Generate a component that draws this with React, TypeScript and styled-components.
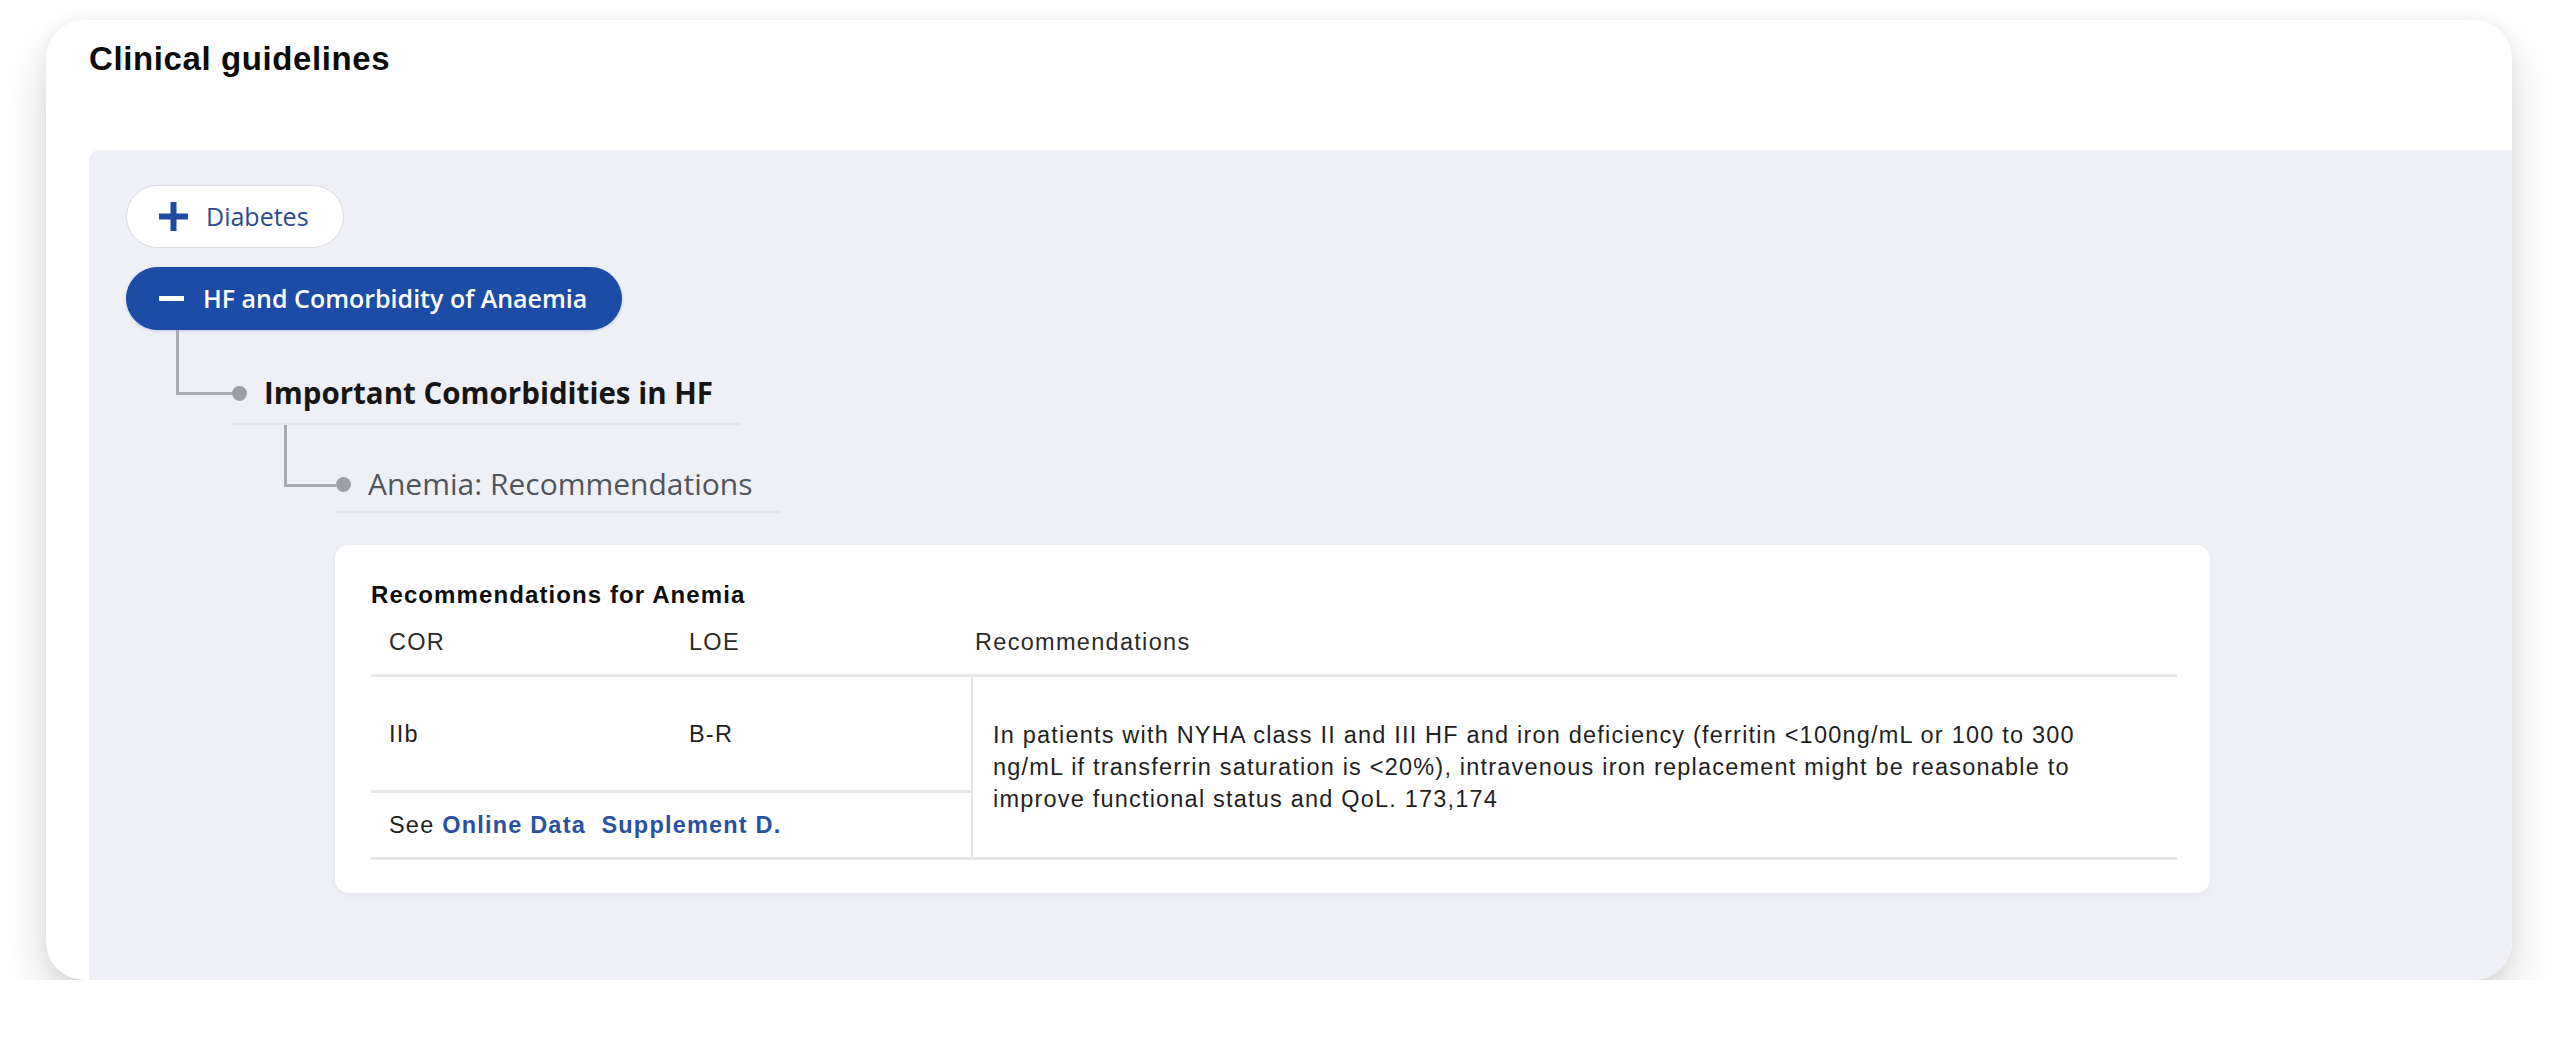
import React from 'react';
import styled, { createGlobalStyle } from 'styled-components';

const GlobalStyle = createGlobalStyle`
  html, body {
    margin: 0;
    padding: 0;
    background: #ffffff;
  }
  body {
    font-family: 'Liberation Sans', Arial, sans-serif;
  }
`;

const Page = styled.div`
  padding: 20px 48px 0 46px;
`;

const Card = styled.section`
  height: 960px;
  display: flex;
  flex-direction: column;
  background: #ffffff;
  border-radius: 38px;
  overflow: hidden;
  box-shadow: 0 24px 46px rgba(0, 0, 0, 0.16), 0 0 16px rgba(0, 0, 0, 0.05);
`;

const Header = styled.header`
  height: 130px;
  box-sizing: border-box;
  padding: 19px 0 0 43px;
`;

const Title = styled.h1`
  margin: 0;
  font: 700 33px/40px 'Liberation Sans', Arial, sans-serif;
  letter-spacing: 0.6px;
  color: #0b0b0b;
`;

const Panel = styled.div`
  flex: 1;
  margin-left: 43px;
  background: #eff0f5;
  border-top-left-radius: 10px;
  padding: 35px 0 0 37px;
`;

const PillList = styled.div`
  display: flex;
  flex-direction: column;
  align-items: flex-start;
  gap: 19px;
`;

const Group = styled.div`
  display: flex;
  flex-direction: column;
  align-items: flex-start;
`;

const Pill = styled.button<{ $active?: boolean }>`
  display: inline-flex;
  align-items: center;
  gap: ${p => (p.$active ? '19px' : '18px')};
  height: 63px;
  box-sizing: border-box;
  padding: 0 34px 0 32px;
  border-radius: 32px;
  border: 1.5px solid ${p => (p.$active ? '#1c4ca6' : '#d9dae0')};
  background: ${p => (p.$active ? '#1c4ca6' : '#ffffff')};
  color: ${p => (p.$active ? '#ffffff' : '#2d4b91')};
  font-family: 'Open Sans', 'Noto Sans', sans-serif;
  font-size: 25px;
  font-weight: ${p => (p.$active ? 600 : 400)};
  line-height: 1;
  cursor: pointer;
  box-shadow: ${p => (p.$active ? '0 1px 3px rgba(28, 76, 166, 0.25)' : 'none')};

  svg {
    flex: none;
    display: block;
  }
`;

const Branch = styled.div<{ $indent: number }>`
  display: flex;
  flex-direction: column;
  align-items: flex-start;
  margin-left: ${p => p.$indent}px;
`;

const Item = styled.div`
  display: flex;
  align-items: flex-start;
`;

const Elbow = styled.div<{ $w: number; $h: number }>`
  flex: none;
  width: ${p => p.$w}px;
  height: ${p => p.$h}px;
  box-sizing: border-box;
  border-left: 3px solid #a8aab2;
  border-bottom: 3px solid #a8aab2;
`;

const Node = styled.div<{ $top: number; $pad: number }>`
  display: flex;
  align-items: center;
  gap: 17px;
  margin-top: ${p => p.$top}px;
  padding: ${p => p.$pad}px 27px ${p => p.$pad}px 0;
  border-bottom: 2px solid #e3e4ea;
`;

const Dot = styled.span`
  flex: none;
  width: 15px;
  height: 15px;
  border-radius: 50%;
  background: #9c9fa7;
`;

const NodeLabel = styled.span<{ $strong?: boolean }>`
  font-family: 'Open Sans', 'Noto Sans', sans-serif;
  font-size: ${p => (p.$strong ? '29.5px' : '30px')};
  font-weight: ${p => (p.$strong ? 700 : 400)};
  line-height: 34px;
  color: ${p => (p.$strong ? '#161616' : '#50555d')};
  white-space: nowrap;
`;

const RecCard = styled.div`
  width: 1875px;
  box-sizing: border-box;
  margin: 32px 0 0 51px;
  padding: 36px 33px 33px 36px;
  background: #ffffff;
  border-radius: 14px;
  box-shadow: 0 2px 6px rgba(0, 0, 0, 0.06);
`;

const RecTitle = styled.h3`
  margin: 0;
  font: 700 24px/28px 'Liberation Sans', Arial, sans-serif;
  letter-spacing: 1.1px;
  color: #0d0d0d;
`;

const Table = styled.table`
  width: 100%;
  border-collapse: separate;
  border-spacing: 0;
  table-layout: fixed;
  font-family: 'Liberation Sans', Arial, sans-serif;
  font-size: 23.5px;
  letter-spacing: 1.2px;
  color: #1f1f1f;
`;

const Th = styled.th<{ $pl: number }>`
  text-align: left;
  font-weight: 400;
  line-height: 28px;
  letter-spacing: 1.3px;
  color: #2a2a2a;
  padding: 19px 0 18px ${p => p.$pl}px;
  border-bottom: 3px solid #e6e6e8;
`;

const Td = styled.td<{ $h: number }>`
  line-height: 28px;
  padding: ${p => (p.$h - 28) / 2}px 0 ${p => (p.$h - 28) / 2}px 18px;
  border-bottom: 3px solid #e6e6e8;
  vertical-align: middle;
`;

const RecCell = styled.td`
  line-height: 32px;
  padding: 0 80px 0 20px;
  border-left: 2px solid #e6e6e8;
  border-bottom: 3px solid #e6e6e8;
  vertical-align: middle;
`;

const Link = styled.a`
  color: #2a51a1;
  font-weight: 700;
  text-decoration: none;
`;

const PlusIcon = () => (
  <svg width="29" height="29" viewBox="0 0 29 29" aria-hidden="true">
    <rect x="0" y="11.5" width="29" height="6" fill="#1e4aa2" />
    <rect x="11.5" y="0" width="6" height="29" fill="#1e4aa2" />
  </svg>
);

const MinusIcon = () => (
  <svg width="25" height="25" viewBox="0 0 25 25" aria-hidden="true">
    <rect x="0" y="10" width="25" height="5" fill="#ffffff" />
  </svg>
);

export default function App() {
  return (
    <>
      <GlobalStyle />
      <Page>
        <Card>
          <Header>
            <Title>Clinical guidelines</Title>
          </Header>

          <Panel>
            <PillList>
              <Pill>
                <PlusIcon />
                Diabetes
              </Pill>

              <Group>
                <Pill $active>
                  <MinusIcon />
                  HF and Comorbidity of Anaemia
                </Pill>

                <Branch $indent={50}>
                  <Item>
                    <Elbow $w={56} $h={65} />
                    <Node $top={33} $pad={13}>
                      <Dot />
                      <NodeLabel $strong>Important Comorbidities in HF</NodeLabel>
                    </Node>
                  </Item>

                  <Branch $indent={108}>
                    <Item>
                      <Elbow $w={52} $h={62} />
                      <Node $top={32} $pad={10}>
                        <Dot />
                        <NodeLabel>Anemia: Recommendations</NodeLabel>
                      </Node>
                    </Item>

                    <RecCard>
                      <RecTitle>Recommendations for Anemia</RecTitle>
                      <Table>
                        <colgroup>
                          <col style={{ width: 300 }} />
                          <col style={{ width: 300 }} />
                          <col />
                        </colgroup>
                        <thead>
                          <tr>
                            <Th $pl={18}>COR</Th>
                            <Th $pl={18}>LOE</Th>
                            <Th $pl={4}>Recommendations</Th>
                          </tr>
                        </thead>
                        <tbody>
                          <tr>
                            <Td $h={113}>IIb</Td>
                            <Td $h={113}>B-R</Td>
                            <RecCell rowSpan={2}>
                              In patients with NYHA class II and III HF and iron deficiency (ferritin
                              &lt;100ng/mL or 100 to 300 ng/mL if transferrin saturation is &lt;20%),
                              intravenous iron replacement might be reasonable to improve functional
                              status and QoL. 173,174
                            </RecCell>
                          </tr>
                          <tr>
                            <Td $h={64} colSpan={2}>
                              See <Link href="#">Online Data&nbsp; Supplement D.</Link>
                            </Td>
                          </tr>
                        </tbody>
                      </Table>
                    </RecCard>
                  </Branch>
                </Branch>
              </Group>
            </PillList>
          </Panel>
        </Card>
      </Page>
    </>
  );
}
